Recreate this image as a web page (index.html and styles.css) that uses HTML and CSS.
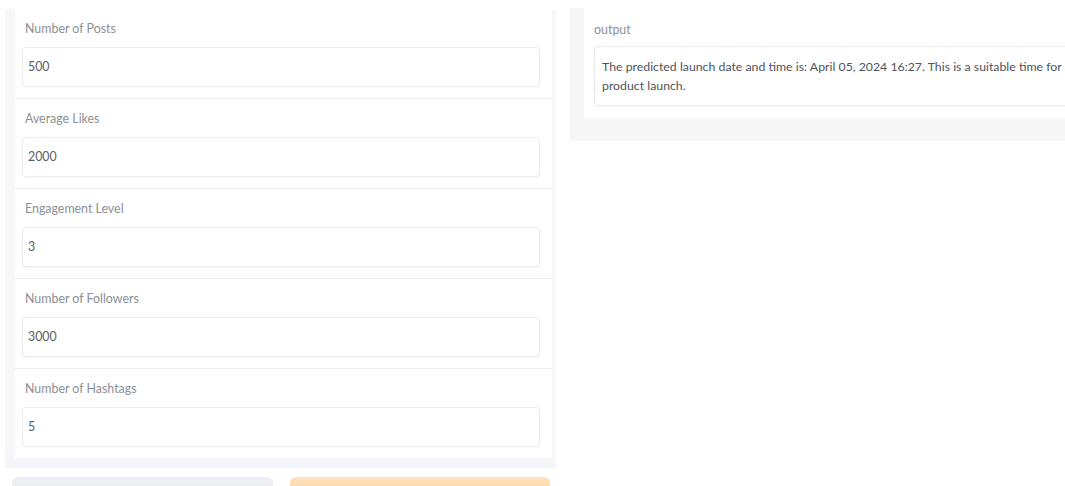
FILE: index.html
```html
<!DOCTYPE html>
<html lang="en">
<head>
<meta charset="utf-8">
<title>Launch Time Predictor</title>
<link rel="stylesheet" href="styles.css">
</head>
<body>
<div class="app">
  <div class="col col-left">
    <div class="panel panel-inputs">
      <div class="form">
        <div class="field">
          <span class="label">Number of Posts</span>
          <div class="input">500</div>
        </div>
        <div class="field">
          <span class="label">Average Likes</span>
          <div class="input">2000</div>
        </div>
        <div class="field">
          <span class="label">Engagement Level</span>
          <div class="input">3</div>
        </div>
        <div class="field">
          <span class="label">Number of Followers</span>
          <div class="input">3000</div>
        </div>
        <div class="field">
          <span class="label">Number of Hashtags</span>
          <div class="input">5</div>
        </div>
      </div>
    </div>
    <div class="actions">
      <button class="btn btn-secondary" aria-label="Clear"></button>
      <button class="btn btn-primary" aria-label="Submit"></button>
    </div>
  </div>
  <div class="col col-right">
    <div class="panel panel-output">
      <div class="form">
        <div class="field field-output">
          <span class="label">output</span>
          <div class="output">The predicted launch date and time is: April 05, 2024 16:27. This is a suitable time for a product launch.</div>
        </div>
      </div>
    </div>
  </div>
</div>
</body>
</html>
```

FILE: styles.css
```css
html, body {
  margin: 0;
  padding: 0;
  background: #ffffff;
  overflow: hidden;
}

body {
  font-family: "Lato", "Open Sans", sans-serif;
  font-size: 12px;
  color: #4b5563;
}

.app {
  display: flex;
  align-items: flex-start;
  gap: 14px;
  width: 1180px;
  padding: 9px 0 0 5px;
}

.col-left {
  width: 551px;
  display: flex;
  flex-direction: column;
  gap: 9px;
}

.col-right {
  width: 610px;
  margin-top: -1px;
}

.panel {
  background: #f7f7f8;
  padding: 0 4px 10px 10px;
}

.panel-inputs {
  background: linear-gradient(#f7f7f8 95%, #f3f6fa);
}

.panel-output {
  padding: 0 0 23px 14px;
}

.form {
  display: flex;
  flex-direction: column;
  gap: 1px;
  background: #eeeeef;
}

.field {
  background: #ffffff;
  padding: 11px 12px 11px 7px;
  display: flex;
  flex-direction: column;
  gap: 9px;
}

.label {
  line-height: 18px;
  height: 18px;
  font-size: 12.4px;
  color: #8b8f96;
  padding-left: 3px;
}

.input {
  height: 38px;
  line-height: 38px;
  border: 1px solid #ececee;
  border-radius: 4px;
  box-shadow: 0 1px 2px rgba(0, 0, 0, 0.04);
  padding: 0 5px;
  font-size: 12.4px;
  color: #5b6068;
  background: #ffffff;
}

.field-output {
  padding: 13px 0 12px 7px;
  gap: 7px;
}

.output {
  border: 1px solid #ececee;
  border-radius: 4px;
  box-shadow: 0 1px 2px rgba(0, 0, 0, 0.04);
  padding: 10px 10px 10px 7px;
  line-height: 19px;
  font-size: 12.3px;
  color: #4f545c;
  margin-left: 3px;
  width: 480px;
}

.actions {
  display: flex;
  gap: 17px;
  padding: 0 6px 0 7px;
}

.btn {
  flex: 1;
  height: 36px;
  border: none;
  border-radius: 6px;
}

.btn-secondary {
  background: linear-gradient(#eef0f3, #e4e7eb);
}

.btn-primary {
  background: linear-gradient(#fde0bd, #fcc98d);
}
```
